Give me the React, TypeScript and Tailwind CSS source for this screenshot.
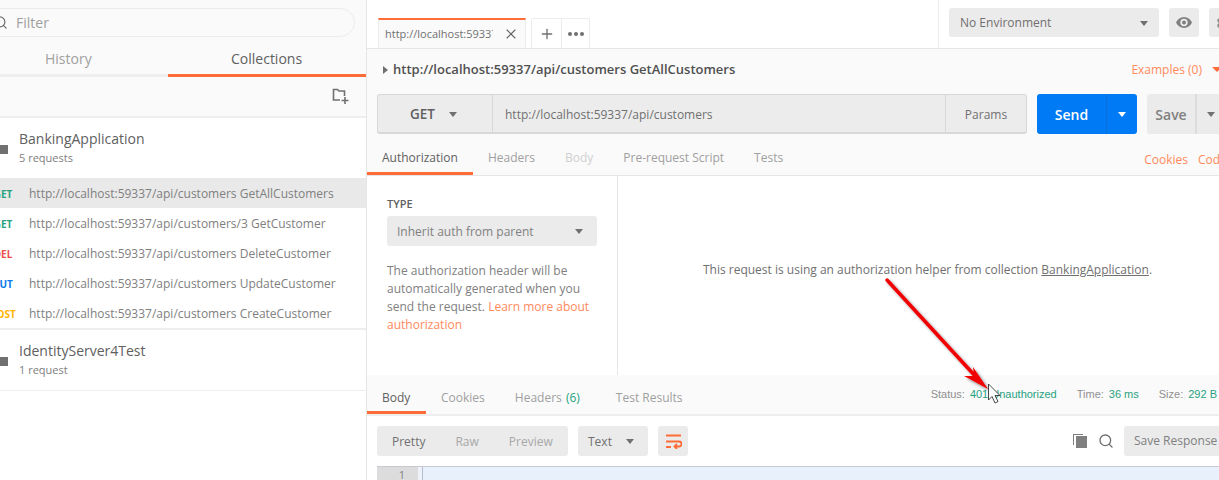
import { Plus, Search, Settings, X } from "lucide-react";

const font = { fontFamily: '"Open Sans", sans-serif' };

const requests = [
  { method: "GET", color: "text-[#26a17f]", name: "http://localhost:59337/api/customers GetAllCustomers", active: true },
  { method: "GET", color: "text-[#26a17f]", name: "http://localhost:59337/api/customers/3 GetCustomer" },
  { method: "DEL", color: "text-[#ed4b48]", name: "http://localhost:59337/api/customers DeleteCustomer" },
  { method: "PUT", color: "text-[#097bed]", name: "http://localhost:59337/api/customers UpdateCustomer" },
  { method: "POST", color: "text-[#ffb400]", name: "http://localhost:59337/api/customers CreateCustomer" },
];

function Caret({ className = "border-t-[#707070]" }: { className?: string }) {
  return (
    <span
      className={`h-0 w-0 border-x-[4.5px] border-t-[5px] border-x-transparent ${className}`}
    />
  );
}

function FolderIcon() {
  return (
    <svg width="26" height="11" viewBox="0 0 26 11" className="-ml-[18px] shrink-0">
      <path d="M0 0h10l2 2h14v9H0z" fill="#707070" />
    </svg>
  );
}

function CollectionRow({ name, sub }: { name: string; sub: string }) {
  return (
    <div className="flex h-[60px] items-center">
      <div className="flex w-[19px] shrink-0">
        <FolderIcon />
      </div>
      <div>
        <div className="text-[14px] leading-[20px] text-[#606060]">{name}</div>
        <div className="text-[11px] leading-[18px] text-[#808080]">{sub}</div>
      </div>
    </div>
  );
}

function Sidebar() {
  return (
    <div className="flex h-full w-[367px] shrink-0 flex-col border-r border-[#e6e6e6] bg-white">
      <div className="h-[37px] shrink-0 bg-[#fafafa] pt-[8px] pr-[11px]">
        <div className="-ml-[20px] flex h-[29px] items-center rounded-full border border-[#ececec] pl-[12px]">
          <Search size={15} strokeWidth={2} className="text-[#707070]" />
          <span className="ml-[8px] text-[14px] text-[#a0a0a0]">Filter</span>
        </div>
      </div>
      <div className="flex h-[40px] shrink-0 border-b-[3px] border-[#eeeeee] bg-[#fafafa]">
        <div className="w-[168px] pt-[12px] pl-[45px] text-[14px] leading-[20px] text-[#a0a0a0]">History</div>
        <div className="-mb-[3px] flex-1 border-b-[3px] border-[#ff6c37] pt-[12px] pl-[63px] text-[14px] leading-[20px] text-[#606060]">
          Collections
        </div>
      </div>
      <div className="flex h-[41px] shrink-0 items-center justify-end border-b-2 border-[#eeeeee] bg-[#fafafa] pr-[17px]">
        <svg width="17" height="17" viewBox="0 0 17 17" fill="none" stroke="#707070" strokeWidth="1.6">
          <path d="M8 12H1.5V1.5h4l1.5 1.5h5.500v5" />
          <path d="M13 9v7M9.500 12.500h7" />
        </svg>
      </div>
      <CollectionRow name="BankingApplication" sub="5 requests" />
      {requests.map((r) => (
        <div key={r.name} className={`flex h-[30px] items-center pt-[2px] ${r.active ? "bg-[#e9e9e9]" : ""}`}>
          <span className={`-ml-[15px] w-[36px] shrink-0 text-center text-[10px] font-bold ${r.color}`}>
            {r.method}
          </span>
          <span className="ml-[8px] text-[12px] whitespace-nowrap text-[#808080]">{r.name}</span>
        </div>
      ))}
      <div className="border-t-2 border-b border-[#eeeeee]">
        <CollectionRow name="IdentityServer4Test" sub="1 request" />
      </div>
    </div>
  );
}

function TopBar() {
  return (
    <div className="flex h-[49px] shrink-0 border-b border-[#e6e6e6] bg-white">
      <div className="ml-[11px] flex h-[48px] items-end">
        <div className="flex h-[30px] w-[148px] items-center border-t-2 border-r border-l border-t-[#ff6c37] border-r-[#ececec] border-l-[#ececec] bg-[#fafafa] pl-[6px]">
          <span className="w-[108px] overflow-hidden text-[11px] whitespace-nowrap text-[#707070]">
            http://localhost:59337
          </span>
          <X size={16} strokeWidth={1.6} className="ml-[10px] text-[#606060]" />
        </div>
        <div className="ml-[5px] flex h-[30px] w-[59px] rounded-t-[2px] border border-b-0 border-[#ececec]">
          <div className="flex w-[30px] items-center justify-center border-r border-[#ececec]">
            <Plus size={16} strokeWidth={2} className="text-[#707070]" />
          </div>
          <div className="flex flex-1 items-center justify-center gap-[2px]">
            <span className="h-[4px] w-[4px] rounded-full bg-[#707070]" />
            <span className="h-[4px] w-[4px] rounded-full bg-[#707070]" />
            <span className="h-[4px] w-[4px] rounded-full bg-[#707070]" />
          </div>
        </div>
      </div>
      <div className="ml-auto flex h-[48px] w-[281px] shrink-0 items-start border-l border-[#ececec] pt-[8px] pl-[10px]">
        <div className="flex h-[29px] w-[210px] shrink-0 items-center justify-between rounded-[3px] bg-[#ebebeb] px-[11px] pt-[1px] text-[12px] text-[#707070]">
          No Environment
          <Caret />
        </div>
        <div className="ml-[10px] flex h-[29px] w-[30px] shrink-0 items-center justify-center rounded-[3px] bg-[#ebebeb]">
          <svg width="16" height="11" viewBox="0 0 16 11">
            <path
              fillRule="evenodd"
              d="M8 0c3.500 0 6.500 2.200 8 5.500C14.500 8.800 11.500 11 8 11S1.500 8.800 0 5.500C1.500 2.200 4.500 0 8 0zm0 1.800a3.700 3.700 0 1 0 0 7.400 3.700 3.700 0 0 0 0-7.400z"
              fill="#808080"
            />
            <circle cx="8" cy="5.500" r="2" fill="#808080" />
          </svg>
        </div>
        <div className="ml-[10px] flex h-[29px] w-[30px] shrink-0 items-center justify-center rounded-[3px] bg-[#ebebeb]">
          <Settings size={16} className="text-[#808080]" />
        </div>
      </div>
    </div>
  );
}

function RequestArea() {
  return (
    <div className="h-[127px] shrink-0 border-b border-[#e6e6e6] bg-[#fafafa]">
      <div className="flex h-[45px] items-center pb-[4px]">
        <span className="ml-[16px] h-0 w-0 border-y-[4.500px] border-l-[5px] border-y-transparent border-l-[#707070]" />
        <span className="ml-[5px] text-[13px] font-semibold whitespace-nowrap text-[#505050]">
          http://localhost:59337/api/customers GetAllCustomers
        </span>
        <span className="ml-auto text-[12px] text-[#ff8a5c]">Examples (0)</span>
        <span className="mr-[-3px] ml-[10px] h-0 w-0 border-x-[5px] border-t-[5px] border-x-transparent border-t-[#ff6c37]" />
      </div>
      <div className="flex h-[40px] pl-[10px]">
        <div className="flex h-[40px] w-[650px] shrink-0 rounded-[3px] border border-b-2 border-[#d8d8d8] bg-[#ececec]">
          <div className="flex w-[115px] items-center border-r border-[#d8d8d8] pt-[2px] pl-[32px]">
            <span className="text-[13.500px] font-semibold text-[#606060]">GET</span>
            <span className="ml-[14px] flex"><Caret /></span>
          </div>
          <div className="flex flex-1 items-center pt-[2px] pl-[12px] text-[12px] text-[#707070]">
            http://localhost:59337/api/customers
          </div>
          <div className="flex w-[81px] items-center justify-center border-l border-[#d8d8d8] pt-[2px] text-[12px] text-[#707070]">
            Params
          </div>
        </div>
        <div className="ml-[10px] flex h-[40px] w-[100px] shrink-0 rounded-[3px] bg-[#007bf5] text-white">
          <div className="flex w-[70px] items-center justify-center border-r border-[#0a6fd6] text-[14px] font-semibold">
            Send
          </div>
          <div className="flex flex-1 items-center justify-center">
            <Caret className="border-t-white" />
          </div>
        </div>
        <div className="ml-[10px] flex h-[40px] w-[90px] shrink-0 rounded-[3px] bg-[#ebebeb]">
          <div className="flex w-[50px] items-center justify-center border-r-2 border-[#dcdcdc] text-[14px] font-semibold text-[#808080]">
            Save
          </div>
          <div className="flex w-[28px] items-center justify-center">
            <Caret />
          </div>
        </div>
      </div>
      <div className="mt-[9px] flex h-[32px] text-[12px] text-[#a0a0a0]">
        <div className="w-[106px] border-b-[3px] border-[#ff6c37] pt-[6px] pl-[15px] text-[#606060]">Authorization</div>
        <div className="ml-[15px] pt-[6px]">Headers</div>
        <div className="ml-[30px] pt-[6px] text-[#d0d0d0]">Body</div>
        <div className="ml-[30px] pt-[6px]">Pre-request Script</div>
        <div className="ml-[30px] pt-[6px]">Tests</div>
        <div className="ml-auto pt-[8px] whitespace-nowrap text-[#ff8a5c]">Cookies</div>
        <div className="mr-[-12px] ml-[10px] w-[33px] overflow-hidden pt-[8px] text-[#ff8a5c]">Code</div>
      </div>
    </div>
  );
}

function AuthPanel() {
  return (
    <div className="flex h-[199px] shrink-0 bg-white">
      <div className="w-[251px] shrink-0 border-r border-[#e6e6e6] pt-[20px] pl-[20px]">
        <div className="text-[11px] leading-[16px] font-semibold text-[#606060]">TYPE</div>
        <div className="mt-[4px] flex h-[30px] w-[210px] items-center justify-between rounded-[3px] bg-[#ebebeb] pt-[1px] pr-[14px] pl-[10px] text-[12px] text-[#808080]">
          Inherit auth from parent
          <Caret />
        </div>
        <p className="mt-[16px] w-[215px] text-[12px] leading-[18px] text-[#808080]">
          The authorization header will be automatically generated when you send the request.{" "}
          <span className="text-[#ff8a5c]">Learn more about authorization</span>
        </p>
      </div>
      <div className="flex-1 pt-[85px] pl-[18px] text-center text-[12px] leading-[18px] text-[#707070]">
        This request is using an authorization helper from collection <span className="underline">BankingApplication</span>.
      </div>
    </div>
  );
}

function ResponseTabs() {
  const arial = { fontFamily: '"Liberation Sans", sans-serif' };
  return (
    <div className="flex h-[41px] shrink-0 border-b-2 border-[#eeeeee] bg-[#fafafa] text-[12px] text-[#a0a0a0]">
      <div className="h-[39px] w-[59px] border-b-[3px] border-[#ff6c37] pt-[14px] pl-[15px] text-[#606060]">Body</div>
      <div className="ml-[15px] pt-[14px]">Cookies</div>
      <div className="ml-[30px] pt-[14px]">
        Headers <span className="ml-[1px] text-[#26a17f]">(6)</span>
      </div>
      <div className="ml-[36px] pt-[14px]">Test Results</div>
      <div style={arial} className="ml-auto flex pt-[11px] text-[11px] whitespace-nowrap">
        <span className="text-[#909090]">Status:</span>
        <span className="ml-[5px] text-[#26a17f]">401 Unauthorized</span>
        <span className="ml-[20px] text-[#909090]">Time:</span>
        <span className="ml-[5px] text-[#26a17f]">36 ms</span>
        <span className="ml-[20px] text-[#909090]">Size:</span>
        <span className="mr-[2px] ml-[5px] text-[#26a17f]">292 B</span>
      </div>
    </div>
  );
}

function ResponseToolbar() {
  return (
    <div className="flex h-[50px] shrink-0 items-center bg-white pl-[10px] text-[12px]">
      <div className="flex h-[30px] w-[191px] shrink-0 items-center rounded-[3px] bg-[#ebebeb] pt-[1px]">
        <span className="ml-[15px] text-[#707070]">Pretty</span>
        <span className="ml-[30px] text-[#a8a8a8]">Raw</span>
        <span className="ml-[30px] text-[#a8a8a8]">Preview</span>
      </div>
      <div className="ml-[10px] flex h-[30px] w-[70px] shrink-0 items-center rounded-[3px] bg-[#ebebeb] pt-[1px] pl-[10px] text-[#707070]">
        Text
        <span className="ml-[14px] flex"><Caret /></span>
      </div>
      <div className="ml-[10px] flex h-[30px] w-[30px] shrink-0 items-center justify-center rounded-[3px] bg-[#ebebeb]">
        <svg width="17" height="15" viewBox="0 0 17 15" fill="none" stroke="#ff6c37" strokeWidth="1.800">
          <path d="M1 1.500h15M1 7.500h13a2.500 2.500 0 0 1 0 5h-4M12 10l-2.500 2.500L12 15M1 13h5" />
        </svg>
      </div>
      <svg width="16" height="16" viewBox="0 0 16 16" className="ml-auto shrink-0" fill="#808080">
        <path d="M4 3h11v12H4z" />
        <path d="M1 1h10v1H2v10H1z" />
      </svg>
      <Search size={16} strokeWidth={2} className="ml-[10px] shrink-0 text-[#707070]" />
      <div className="mr-[-20px] ml-[10px] flex h-[30px] w-[115px] shrink-0 items-center rounded-[3px] bg-[#ebebeb] pl-[10px] whitespace-nowrap text-[#808080]">
        Save Response
      </div>
    </div>
  );
}

function Editor() {
  return (
    <div className="flex flex-1 bg-white pl-[10px]">
      <div className="flex w-full border-t border-[#c8c8d0] bg-[#e8f0fc]">
        <div className="w-[41px] bg-[#dcdcdc] pr-[13px] text-right text-[11px] leading-[15px] text-[#808080]">1</div>
        <div className="w-[5px] border-r border-[#b8bccc] bg-[#eef3fb]" />
      </div>
    </div>
  );
}

function Annotation() {
  return (
    <svg width="1219" height="480" viewBox="0 0 1219 480" className="pointer-events-none absolute top-0 left-0">
      <defs>
        <filter id="arrow-shadow" x="-20%" y="-20%" width="140%" height="140%">
          <feDropShadow dx="2" dy="2" stdDeviation="1.800" floodColor="#000" floodOpacity="0.45" />
        </filter>
      </defs>
      <g filter="url(#arrow-shadow)">
        <path d="M887 280L977 378" stroke="#f00000" strokeWidth="3.500" strokeLinecap="round" />
        <path d="M988 389L964 376L974 376L973 367z" fill="#f00000" />
      </g>
      <path
        d="M988.500 384v16l3.500-3.500 3 6.500 3-1.500-3-6h5z"
        fill="#fff"
        stroke="#333"
        strokeWidth="0.900"
        strokeLinejoin="round"
      />
    </svg>
  );
}

export default function App() {
  return (
    <div style={font} className="relative flex h-[480px] w-[1219px] overflow-hidden bg-white">
      <Sidebar />
      <div className="flex h-full w-[852px] shrink-0 flex-col">
        <TopBar />
        <RequestArea />
        <AuthPanel />
        <ResponseTabs />
        <ResponseToolbar />
        <Editor />
      </div>
      <Annotation />
    </div>
  );
}
